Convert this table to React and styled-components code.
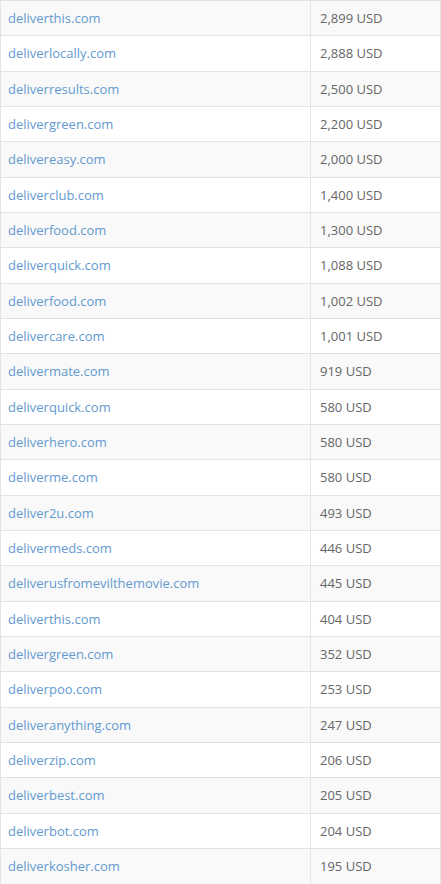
import React from 'react';
import styled, { createGlobalStyle } from 'styled-components';

const sales = [
  ['deliverthis.com', '2,899 USD'],
  ['deliverlocally.com', '2,888 USD'],
  ['deliverresults.com', '2,500 USD'],
  ['delivergreen.com', '2,200 USD'],
  ['delivereasy.com', '2,000 USD'],
  ['deliverclub.com', '1,400 USD'],
  ['deliverfood.com', '1,300 USD'],
  ['deliverquick.com', '1,088 USD'],
  ['deliverfood.com', '1,002 USD'],
  ['delivercare.com', '1,001 USD'],
  ['delivermate.com', '919 USD'],
  ['deliverquick.com', '580 USD'],
  ['deliverhero.com', '580 USD'],
  ['deliverme.com', '580 USD'],
  ['deliver2u.com', '493 USD'],
  ['delivermeds.com', '446 USD'],
  ['deliverusfromevilthemovie.com', '445 USD'],
  ['deliverthis.com', '404 USD'],
  ['delivergreen.com', '352 USD'],
  ['deliverpoo.com', '253 USD'],
  ['deliveranything.com', '247 USD'],
  ['deliverzip.com', '206 USD'],
  ['deliverbest.com', '205 USD'],
  ['deliverbot.com', '204 USD'],
  ['deliverkosher.com', '195 USD'],
];

const GlobalStyle = createGlobalStyle`
  body {
    margin: 0;
    background: #fff;
    font-family: "Open Sans", "Liberation Sans", sans-serif;
  }
`;

const App = () => {
  return (
    <>
      <GlobalStyle />
      <Table>
        <tbody>
          {sales.map(([domain, price], i) => (
            <Row key={i} $striped={i % 2 === 0}>
              <DomainCell>
                <DomainLink href="#">{domain}</DomainLink>
              </DomainCell>
              <PriceCell>{price}</PriceCell>
            </Row>
          ))}
        </tbody>
      </Table>
    </>
  );
};

export default App;

const Table = styled.table`
  width: 441px;
  border-collapse: collapse;
  border-left: 1px solid #e4e4e4;
  border-right: 1px solid #e4e4e4;
`;

const Row = styled.tr`
  height: 35.33px;
  background-color: ${(p) => (p.$striped ? '#f9f9f9' : '#fff')};
  border-top: 1px solid #e2e2e2;
`;

const DomainCell = styled.td`
  width: 302px;
  padding: 0 0 0 7px;
  font-size: 13px;
  line-height: 18px;
  border-right: 1px solid #e6e6e6;
  vertical-align: middle;
`;

const DomainLink = styled.a`
  color: #6399d0;
  text-decoration: none;
`;

const PriceCell = styled.td`
  padding: 0 0 0 9px;
  font-size: 13px;
  line-height: 18px;
  color: #666;
  vertical-align: middle;
`;
